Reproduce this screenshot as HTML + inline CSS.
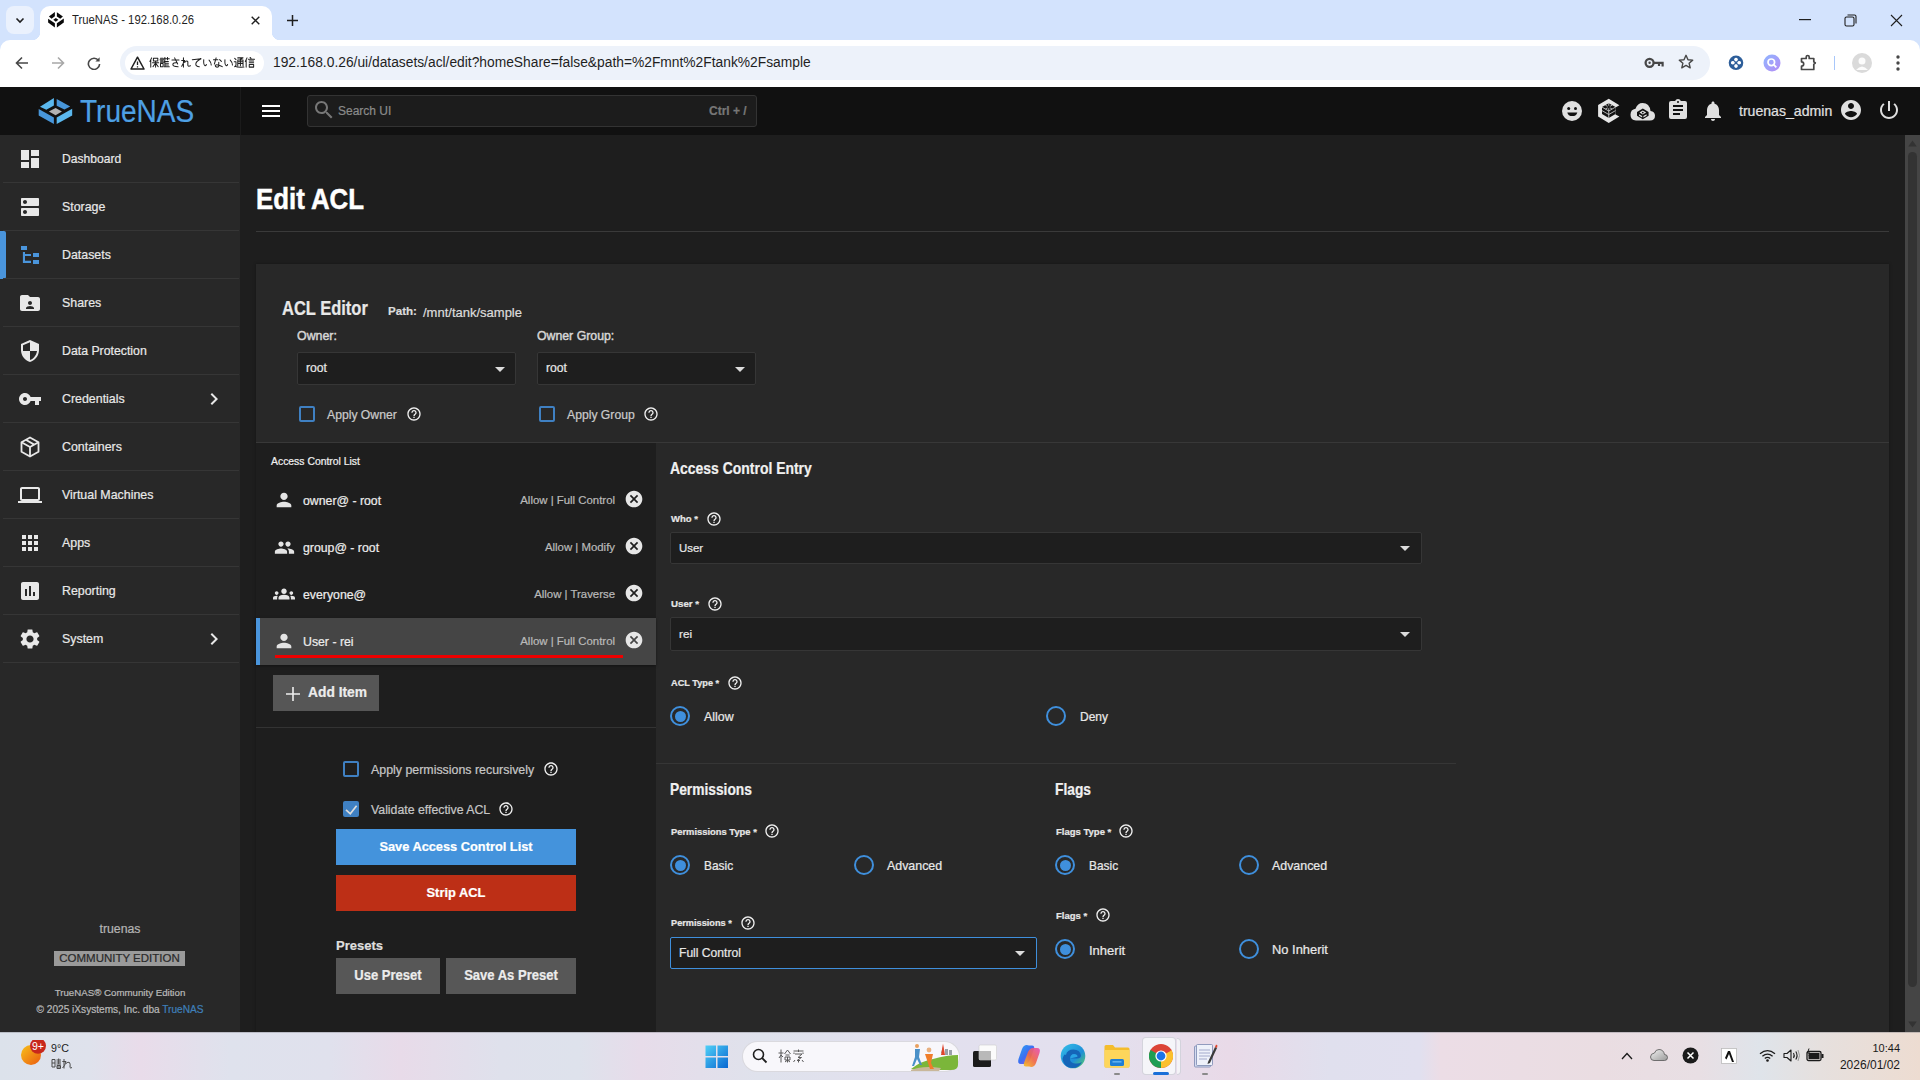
<!DOCTYPE html>
<html><head><meta charset="utf-8">
<style>
*{box-sizing:border-box;margin:0;padding:0}
html,body{width:1920px;height:1080px;overflow:hidden;background:#1e1e1e;font-family:"Liberation Sans",sans-serif}
.a{position:absolute}
.t{position:absolute;white-space:nowrap;line-height:1}
.w{-webkit-text-stroke:0.22px currentColor}
#chrome{position:absolute;left:0;top:0;width:1920px;height:87px;background:#d3e3fd}
#toolbar{position:absolute;left:0;top:40px;width:1920px;height:47px;background:#fff;border-radius:10px 10px 0 0}
#topbar{position:absolute;left:0;top:87px;width:1920px;height:48px;background:#111}
#sidebar{position:absolute;left:0;top:135px;width:240px;height:897px;background:#282828}
#main{position:absolute;left:240px;top:135px;width:1665px;height:897px;background:#1e1e1e}
#sb{position:absolute;left:1905px;top:135px;width:15px;height:897px;background:#454545}
#taskbar{position:absolute;left:0;top:1032px;width:1920px;height:48px;background:linear-gradient(90deg,#dce2eb 0px,#dfe2ec 90px,#e9dcea 140px,#dfe2ed 230px,#e0e1ed 330px,#e8dbe9 400px,#dfe1ec 500px,#dee2ec 580px,#e7dcea 640px,#dfe2ec 760px,#e2e0ee 900px,#e3e0ee 1100px,#e9dae8 1230px,#e0e0ee 1330px,#e1e0ef 1420px,#ecdde6 1440px,#eadde2 1600px,#e8dfe4 1700px,#dfe4ea 1760px,#e6e0de 1820px,#eddcd1 1920px)}
.nav{position:absolute;left:0;width:240px;height:48px}
.nav .lbl{-webkit-text-stroke:0.2px currentColor;position:absolute;left:62px;top:18px;font-size:13px;color:#e8e8e8;line-height:1;white-space:nowrap}
.nav .dv{position:absolute;left:3px;right:1px;bottom:0;height:1px;background:#363636}
.nav svg{position:absolute;left:20px;top:14px}
</style></head><body>
<div id="chrome">
  <div class="a" style="left:6px;top:6px;width:28px;height:28px;border-radius:8px;background:#eaf1fd"></div>
  <svg class="a" style="left:14px;top:14px" width="12" height="12" viewBox="0 0 12 12"><path d="M2.5 4.5L6 8l3.5-3.5" fill="none" stroke="#1f1f1f" stroke-width="1.6"/></svg>
  <div class="a" style="left:40px;top:6px;width:232px;height:34px;background:#fff;border-radius:10px 10px 0 0"></div>
  <div class="a" style="left:32px;top:32px;width:8px;height:8px;background:radial-gradient(circle at 0 0,#d3e3fd 8px,#fff 8.5px)"></div>
  <div class="a" style="left:272px;top:32px;width:8px;height:8px;background:radial-gradient(circle at 100% 0,#d3e3fd 8px,#fff 8.5px)"></div>
  <svg class="a" style="left:44px;top:8px" width="24" height="24" viewBox="44 8 24 24"><g fill="#0a0a0a"><path d="M48.9 16.4L54.9 12.1V16.2L51.6 18.7Z"/><path d="M56.9 12.2L62.9 16.4L60.2 18.7L56.9 16.4Z"/><path d="M48.1 18.7L54.9 23.3V27.6L48.1 22.4Z"/><path d="M56.9 23.3L63.8 18.4V22.4L56.9 27.6Z"/><path d="M53.3 19.8L55.8 18L58.4 19.8L55.8 21.8Z"/></g></svg>
  <div class="t" style="left:72px;top:14px;font-size:12.5px;color:#1f1f1f;transform:scaleX(0.904);transform-origin:0 0">TrueNAS - 192.168.0.26</div>
  <svg class="a" style="left:251px;top:16px" width="9" height="9" viewBox="0 0 9 9"><path d="M0.7 0.7L8.3 8.3M8.3 0.7L0.7 8.3" stroke="#1f1f1f" stroke-width="1.4"/></svg>
  <svg class="a" style="left:287px;top:15px" width="11" height="11" viewBox="0 0 11 11"><path d="M5.5 0V11M0 5.5H11" stroke="#1f1f1f" stroke-width="1.5"/></svg>
  <svg class="a" style="left:1799px;top:19px" width="12" height="2"><rect width="12" height="1.2" fill="#1f1f1f"/></svg>
  <svg class="a" style="left:1844px;top:14px" width="13" height="13" viewBox="0 0 13 13"><rect x="1" y="3" width="9" height="9" rx="1.5" fill="none" stroke="#1f1f1f" stroke-width="1.1"/><path d="M3.5 1H10.5Q12 1 12 2.5V9.5" fill="none" stroke="#1f1f1f" stroke-width="1.1"/></svg>
  <svg class="a" style="left:1890px;top:14px" width="13" height="13" viewBox="0 0 13 13"><path d="M1 1L12 12M12 1L1 12" stroke="#1f1f1f" stroke-width="1.1"/></svg>
  <div id="toolbar">
    <svg class="a" style="left:15px;top:16px" width="14" height="14" viewBox="0 0 14 14"><path d="M13 7H2M7 1.5L1.5 7L7 12.5" fill="none" stroke="#474747" stroke-width="1.6"/></svg>
    <svg class="a" style="left:51px;top:16px" width="14" height="14" viewBox="0 0 14 14"><path d="M1 7H12M7 1.5L12.5 7L7 12.5" fill="none" stroke="#a8a8a8" stroke-width="1.6"/></svg>
    <svg class="a" style="left:87px;top:16px" width="14" height="14" viewBox="0 0 14 14"><path d="M11.6 4.6A5.6 5.6 0 1 0 12.6 8" fill="none" stroke="#474747" stroke-width="1.6"/><path d="M12.6 1.2V5.4H8.4Z" fill="#474747"/></svg>
    <div class="a" style="left:120px;top:6px;width:1590px;height:34px;border-radius:17px;background:#edf2fa"></div>
    <div class="a" style="left:125px;top:11px;width:139px;height:24px;border-radius:12px;background:#fff"></div>
    <svg class="a" style="left:130px;top:16px" width="15" height="14" viewBox="0 0 15 14"><path d="M7.5 1.2L14 13H1Z" fill="none" stroke="#1f1f1f" stroke-width="1.5" stroke-linejoin="round"/><path d="M7.5 5.5V9M7.5 10.3V11.5" stroke="#1f1f1f" stroke-width="1.3"/></svg>
    <svg class="a" style="left:149px;top:17px" width="108" height="12" viewBox="0 0 108 12"><g fill="none" stroke="#1f1f1f" stroke-width="1.15" stroke-linecap="round" stroke-linejoin="round"><path transform="translate(0.0,0) scale(0.88)" d="M3 1L1 5M2 3.5V11.5M5 1.5H10V4.5H5Z M4 6.5H11M7.5 4.5V11.5M7.5 7L4.5 11M7.5 7L10.5 11"/><path transform="translate(10.6,0) scale(0.88)" d="M1 1.5H4M0.5 3H4.5M1 4.5H4M1 6H4M1 7.5H4V11H1Z M6 0.5V3M9 0.5V3M5 2H11M6 3.5L5 6M6 4.5V11M6 5H10M6 7H10M6 9H10M5.5 11H11"/><path transform="translate(21.2,0) scale(0.88)" d="M2 3.5H10M5 1L8.5 8M8 6.5Q3 6 3 8.5Q3 11 9 11"/><path transform="translate(31.8,0) scale(0.88)" d="M3 1V11.5M1 4H4.5Q2 9 1 10.5M4.5 6Q7 3.5 8 5.5V9.5Q8.5 11 11 10"/><path transform="translate(42.4,0) scale(0.88)" d="M1 3Q6 2.5 11 2Q5 5 5 8Q5 11 9 11"/><path transform="translate(53.0,0) scale(0.88)" d="M2 3Q1.5 9 3.5 10Q4.5 10 5 8.5M8 3.5Q10.5 6 10.5 9"/><path transform="translate(63.6,0) scale(0.88)" d="M1 3H6M4 1L2 8M8 3L10 5M7 6V10.5Q7 11.5 5 11.5Q3 11.5 3 10Q3 8.5 6 9Q9 9.5 11 11"/><path transform="translate(74.2,0) scale(0.88)" d="M2 3Q1.5 9 3.5 10Q4.5 10 5 8.5M8 3.5Q10.5 6 10.5 9"/><path transform="translate(84.8,0) scale(0.88)" d="M1 1.5L2.5 3M0.5 5.5H2.5V9.5L1 11M1.5 10.5Q4 12 11.5 11.5M4.5 1H10.5L7.5 2.5M4.5 3.5H10.5V10M4.5 3.5V10M4.5 5.5H10.5M4.5 7.5H10.5M7.5 3.5V10"/><path transform="translate(95.4,0) scale(0.88)" d="M3 1L1 5M2 3.5V11.5M6.5 0.5L7.5 1.5M4.5 2.5H11.5M5.5 4.5H10.5M5.5 6.5H10.5M5.5 8.5H10.5V11.5H5.5Z"/></g></svg>
    <div class="t" style="left:273px;top:16px;font-size:13.8px;color:#1f1f1f">192.168.0.26/ui/datasets/acl/edit?homeShare=false&amp;path=%2Fmnt%2Ftank%2Fsample</div>
    <svg class="a" style="left:1644px;top:16px" width="20" height="14" viewBox="0 0 20 14"><circle cx="5.6" cy="6.8" r="4" fill="none" stroke="#474747" stroke-width="2.3"/><circle cx="5.6" cy="6.8" r="1.2" fill="#474747"/><path d="M9.4 6.8H18.6V10.5M15 6.8V10" fill="none" stroke="#474747" stroke-width="2.2"/></svg>
    <svg class="a" style="left:1678px;top:14px" width="16" height="16" viewBox="0 0 16 16"><path d="M8 1.3L10 5.7L14.7 6.1L11.1 9.2L12.2 13.8L8 11.4L3.8 13.8L4.9 9.2L1.3 6.1L6 5.7Z" fill="none" stroke="#474747" stroke-width="1.4" stroke-linejoin="round"/></svg>
    <svg class="a" style="left:1728px;top:15px" width="16" height="16" viewBox="0 0 16 16"><circle cx="8" cy="7.8" r="7.3" fill="#2d5e9a"/><path d="M8 2.8A1.9 1.9 0 0 1 8 6.4V9.2A1.9 1.9 0 0 1 8 12.8A1.9 1.9 0 0 1 8 9.2V6.4A1.9 1.9 0 0 1 8 2.8Z M3 7.8A1.9 1.9 0 0 1 6.6 7.8H9.4A1.9 1.9 0 0 1 13 7.8A1.9 1.9 0 0 1 9.4 7.8H6.6A1.9 1.9 0 0 1 3 7.8Z" fill="#fff"/><circle cx="4.8" cy="7.8" r="1.8" fill="#fff"/><circle cx="11.2" cy="7.8" r="1.8" fill="#fff"/><circle cx="8" cy="4.6" r="1.8" fill="#fff"/><circle cx="8" cy="11" r="1.8" fill="#fff"/><circle cx="8" cy="7.8" r="1.1" fill="#2d5e9a"/></svg>
    <svg class="a" style="left:1763px;top:14px" width="18" height="18" viewBox="0 0 18 18"><defs><linearGradient id="pg" x1="0" y1="0" x2="1" y2="1"><stop offset="0" stop-color="#8fb6ff"/><stop offset="1" stop-color="#b58cf5"/></linearGradient></defs><circle cx="9" cy="9" r="8.5" fill="url(#pg)"/><circle cx="8.3" cy="8.3" r="3.3" fill="none" stroke="#fff" stroke-width="1.7"/><path d="M10.7 10.7L13.3 13.3" stroke="#fff" stroke-width="1.8"/></svg>
    <svg class="a" style="left:1800px;top:14px" width="18" height="18" viewBox="0 0 18 18"><path d="M1.5 4.5H6.2V3A1.5 1.5 0 0 1 9.2 3V4.5H13.8V7.8L15.3 9L13.8 10.2V15.5H1.5V12.2A1.6 1.6 0 0 0 1.5 7.8Z" fill="none" stroke="#474747" stroke-width="1.7" stroke-linejoin="round"/></svg>
    <div class="a" style="left:1834px;top:16px;width:1px;height:14px;background:#a8c7fa"></div>
    <svg class="a" style="left:1852px;top:13px" width="20" height="20" viewBox="0 0 20 20"><circle cx="10" cy="10" r="10" fill="#dadada"/><circle cx="10" cy="8" r="3.5" fill="#fff" opacity=".9"/><path d="M4 17Q10 10 16 17" fill="#fff" opacity=".9"/></svg>
    <svg class="a" style="left:1895px;top:14px" width="6" height="18" viewBox="0 0 6 18"><circle cx="3" cy="3" r="1.7" fill="#474747"/><circle cx="3" cy="9" r="1.7" fill="#474747"/><circle cx="3" cy="15" r="1.7" fill="#474747"/></svg>
  </div>
</div>
<div id="topbar">
  <svg class="a" style="left:0;top:0" width="240" height="48" viewBox="0 87 240 48">
    <path d="M40 106.7L53.9 98V105.6L46.3 109.8Z" fill="#5bb8ee"/>
    <path d="M56.7 98.9L70.2 106.5L64.4 109.6L56.7 105.7Z" fill="#4896da"/>
    <path d="M38.7 108.9L53.9 117.4V124L38.7 115.6Z" fill="#4896da"/>
    <path d="M56.7 117.4L72.2 108.7V115.6L56.7 124Z" fill="#5bb8ee"/>
    <path d="M48.9 111.5L55.6 108L61.9 111.5L55.6 115.2Z" fill="#b3b3b3"/>
  </svg>
  <div class="t w" style="left:80px;top:9px;font-size:31px;color:#4ea0e4;transform:scaleX(0.903);transform-origin:0 0">TrueNAS</div>
  <div class="a" style="left:240px;top:0;width:1px;height:48px;background:#1b1b1b"></div>
  <svg class="a" style="left:259px;top:12px" width="24" height="24" viewBox="0 0 24 24"><path d="M3 18h18v-2H3v2zm0-5h18v-2H3v2zm0-7v2h18V6H3z" fill="#fff"/></svg>
  <div class="a" style="left:307px;top:8px;width:450px;height:32px;background:#1c1c1c;border:1px solid #333;border-radius:3px"></div>
  <svg class="a" style="left:312px;top:11px" width="24" height="24" viewBox="0 0 24 24"><path d="M15.5 14h-.79l-.28-.27C15.41 12.59 16 11.11 16 9.5 16 5.91 13.09 3 9.5 3S3 5.91 3 9.5 5.91 16 9.5 16c1.61 0 3.09-.59 4.23-1.57l.27.28v.79l5 4.99L20.49 19l-4.99-5zm-6 0C7.01 14 5 11.99 5 9.5S7.01 5 9.5 5 14 7.01 14 9.5 11.99 14 9.5 14z" fill="#777"/></svg>
  <div class="t w" style="left:338px;top:18px;font-size:12px;color:#8a8a8a">Search UI</div>
  <div class="t w" style="left:709px;top:18px;font-size:12px;color:#777;font-weight:bold">Ctrl + /</div>
  <svg class="a" style="left:1560px;top:12px" width="24" height="24" viewBox="0 0 24 24"><circle cx="12" cy="12" r="10" fill="#e0e0e0"/><circle cx="8.7" cy="9.4" r="1.5" fill="#111"/><circle cx="15.5" cy="9.4" r="1.5" fill="#111"/><path d="M7.3 13.4H17.3Q16.6 17 12.3 17Q8 17 7.3 13.4Z" fill="#111"/></svg>
  <svg class="a" style="left:1596px;top:11px" width="26" height="26" viewBox="1596 98 26 26"><path d="M1608.75 98.8L1619.4 105.3L1615.5 107.6V114.4L1619.4 116.5L1608.75 123L1598.1 116.5V105Z" fill="#e6e6e6"/><path d="M1608.75 103.2L1615.5 107.1V113.9L1608.75 118L1602 113.9V107.1Z" fill="#111"/><g stroke="#e6e6e6" stroke-width=".75" fill="none"><path d="M1602 107.1L1608.75 111L1615.5 107.1M1608.75 103.2V118M1602 110.6L1608.75 114.5L1615.5 110.6M1605.4 105.15L1612.1 109.05M1612.1 105.15L1605.4 109.05"/></g><path d="M1608.75 105.6L1610.6 107.1L1608.75 108.6L1606.9 107.1Z" fill="#111"/></svg>
  <svg class="a" style="left:1630px;top:15px" width="26" height="19" viewBox="0 0 26 19"><path d="M6 18.5H20Q25 18.5 25 13.8Q25 9.5 20.5 9Q19.5 1 12.6 1Q7.5 1 5.5 6.8Q0.5 7.5 0.5 12.8Q0.5 18.5 6 18.5Z" fill="#e0e0e0"/><path d="M12.8 6.5L18.6 9.9V13.8L12.8 17.2L7 13.8V9.9Z" fill="#111"/><path d="M12.8 8.6L16.2 10.6L12.8 12.6L9.4 10.6Z M9 12.2L12.2 14V15.6L9 13.8Z M16.6 12.2L13.4 14V15.6L16.6 13.8Z" fill="#e0e0e0"/><circle cx="12.8" cy="10.6" r="0.9" fill="#111"/></svg>
  <svg class="a" style="left:1666px;top:11px" width="24" height="24" viewBox="0 0 24 24"><path d="M17,9H7V7H17M17,13H7V11H17M14,17H7V15H14M12,3A1,1 0 0,1 13,4A1,1 0 0,1 12,5A1,1 0 0,1 11,4A1,1 0 0,1 12,3M19,3H14.82C14.4,1.84 13.3,1 12,1C10.7,1 9.6,1.84 9.18,3H5A2,2 0 0,0 3,5V19A2,2 0 0,0 5,21H19A2,2 0 0,0 21,19V5A2,2 0 0,0 19,3Z" fill="#e0e0e0"/></svg>
  <svg class="a" style="left:1701px;top:12px" width="24" height="24" viewBox="0 0 24 24"><path d="M12 22c1.1 0 2-.9 2-2h-4c0 1.1.89 2 2 2zm6-6v-5c0-3.07-1.64-5.64-4.5-6.32V4c0-.83-.67-1.5-1.5-1.5s-1.5.67-1.5 1.5v.68C7.63 5.36 6 7.92 6 11v5l-2 2v1h16v-1l-2-2z" fill="#e0e0e0"/></svg>
  <div class="t w" style="left:1739px;top:17px;font-size:14.1px;color:#e0e0e0">truenas_admin</div>
  <svg class="a" style="left:1839px;top:11px" width="24" height="24" viewBox="0 0 24 24"><path d="M12 2C6.48 2 2 6.48 2 12s4.48 10 10 10 10-4.48 10-10S17.52 2 12 2zm0 3c1.66 0 3 1.34 3 3s-1.34 3-3 3-3-1.34-3-3 1.34-3 3-3zm0 14.2c-2.5 0-4.71-1.28-6-3.22.03-1.99 4-3.08 6-3.08 1.99 0 5.97 1.09 6 3.08-1.29 1.94-3.5 3.22-6 3.22z" fill="#e0e0e0"/></svg>
  <svg class="a" style="left:1877px;top:11px" width="24" height="24" viewBox="0 0 24 24"><path d="M13 3h-2v10h2V3zm4.83 2.17l-1.42 1.42C17.99 7.86 19 9.81 19 12c0 3.870-3.13 7-7 7s-7-3.13-7-7c0-2.19 1.010-4.14 2.58-5.42L6.17 5.17C4.23 6.82 3 9.26 3 12c0 4.97 4.03 9 9 9s9-4.03 9-9c0-2.74-1.23-5.18-3.17-6.83z" fill="#e0e0e0"/></svg>
</div>
<div id="sidebar">
<div class="nav" style="top:0px">
<svg width="24" height="24" viewBox="0 0 24 24" style="left:18px;top:12px" fill="#e8e8e8"><path d="M3 13h8V3H3v10zm0 8h8v-6H3v6zm10 0h8V11h-8v10zm0-18v6h8V3h-8z"/></svg>
<div class="lbl" style="font-size:12.1px">Dashboard</div>
<div class="dv"></div></div>
<div class="nav" style="top:48px">
<svg width="24" height="24" viewBox="0 0 24 24" style="left:18px;top:12px" fill="#e8e8e8"><path d="M20 13H4c-.55 0-1 .45-1 1v6c0 .55.45 1 1 1h16c.55 0 1-.45 1-1v-6c0-.55-.45-1-1-1zM7 19c-1.1 0-2-.9-2-2s.9-2 2-2 2 .9 2 2-.9 2-2 2zM20 3H4c-.55 0-1 .45-1 1v6c0 .55.45 1 1 1h16c.55 0 1-.45 1-1V4c0-.55-.45-1-1-1zM7 9c-1.1 0-2-.9-2-2s.9-2 2-2 2 .9 2 2-.9 2-2 2z"/></svg>
<div class="lbl" style="font-size:12.4px">Storage</div>
<div class="dv"></div></div>
<div class="nav" style="top:96px">
<div class="a" style="left:0;top:0;width:6px;height:48px;background:#4a95dc;border-radius:0 2px 2px 0"></div>
<svg width="24" height="24" viewBox="0 0 24 24" style="left:18px;top:12px" fill="#4a95dc"><path d="M3 3H9V7H3Z M4.9 9H7V20H4.9Z M7 10.9H13V13.1H7Z M7 17.8H13V20H7Z M15 10H21V14H15Z M15 16.9H21V21H15Z"/></svg>
<div class="lbl" style="font-size:12.4px">Datasets</div>
<div class="dv"></div></div>
<div class="nav" style="top:144px">
<svg width="24" height="24" viewBox="0 0 24 24" style="left:18px;top:12px" fill="#e8e8e8"><path d="M20 6h-8l-2-2H4c-1.1 0-1.99.9-1.99 2L2 18c0 1.1.9 2 2 2h16c1.1 0 2-.9 2-2V8c0-1.1-.9-2-2-2zm-8 4c1.1 0 2 .9 2 2s-.9 2-2 2-2-.9-2-2 .9-2 2-2zm4 8H8v-1c0-1.33 2.67-2 4-2s4 .67 4 2v1z"/></svg>
<div class="lbl" style="font-size:12.4px">Shares</div>
<div class="dv"></div></div>
<div class="nav" style="top:192px">
<svg width="24" height="24" viewBox="0 0 24 24" style="left:18px;top:12px" fill="#e8e8e8"><path d="M12 1L3 5v6c0 5.55 3.84 10.74 9 12 5.16-1.26 9-6.45 9-12V5l-9-4zm0 10.99h7c-.53 4.12-3.28 7.79-7 8.94V12H5V6.3l7-3.11v8.8z"/></svg>
<div class="lbl" style="font-size:12.3px">Data Protection</div>
<div class="dv"></div></div>
<div class="nav" style="top:240px">
<svg width="24" height="24" viewBox="0 0 24 24" style="left:18px;top:12px" fill="#e8e8e8"><path d="M12.65 10C11.83 7.67 9.61 6 7 6c-3.31 0-6 2.69-6 6s2.69 6 6 6c2.61 0 4.83-1.67 5.65-4H17v4h4v-4h2v-4H12.65zM7 14c-1.1 0-2-.9-2-2s.9-2 2-2 2 .9 2 2-.9 2-2 2z"/></svg>
<div class="lbl" style="font-size:12.4px">Credentials</div>
<svg width="24" height="24" viewBox="0 0 24 24" style="left:202px;top:12px" fill="#e8e8e8"><path d="M10 6L8.59 7.41 13.17 12l-4.58 4.59L10 18l6-6z"/></svg>
<div class="dv"></div></div>
<div class="nav" style="top:288px">
<svg width="24" height="24" viewBox="0 0 24 24" style="left:18px;top:12px" fill="#e8e8e8"><g fill="none" stroke="#e8e8e8" stroke-width="1.8" stroke-linejoin="round"><path d="M12 2.5L20.5 7.2V16.8L12 21.5L3.5 16.8V7.2Z"/><path d="M3.5 7.2L12 12L20.5 7.2M12 12V21.5M7.8 4.8L16.2 9.6"/></g></svg>
<div class="lbl" style="font-size:12.4px">Containers</div>
<div class="dv"></div></div>
<div class="nav" style="top:336px">
<svg width="24" height="24" viewBox="0 0 24 24" style="left:18px;top:12px" fill="#e8e8e8"><path d="M20 18c1.1 0 1.99-.9 1.99-2L22 6c0-1.1-.9-2-2-2H4c-1.1 0-2 .9-2 2v10c0 1.1.9 2 2 2H0v2h24v-2h-4zM4 6h16v10H4V6z"/></svg>
<div class="lbl" style="font-size:12.4px">Virtual Machines</div>
<div class="dv"></div></div>
<div class="nav" style="top:384px">
<svg width="24" height="24" viewBox="0 0 24 24" style="left:18px;top:12px" fill="#e8e8e8"><path d="M4 8h4V4H4v4zm6 12h4v-4h-4v4zm-6 0h4v-4H4v4zm0-6h4v-4H4v4zm6 0h4v-4h-4v4zm6-10v4h4V4h-4zm-6 4h4V4h-4v4zm6 6h4v-4h-4v4zm0 6h4v-4h-4v4z"/></svg>
<div class="lbl" style="font-size:12.4px">Apps</div>
<div class="dv"></div></div>
<div class="nav" style="top:432px">
<svg width="24" height="24" viewBox="0 0 24 24" style="left:18px;top:12px" fill="#e8e8e8"><path d="M19 3H5c-1.1 0-2 .9-2 2v14c0 1.1.9 2 2 2h14c1.1 0 2-.9 2-2V5c0-1.1-.9-2-2-2zM9 17H7v-7h2v7zm4 0h-2V7h2v10zm4 0h-2v-4h2v4z"/></svg>
<div class="lbl" style="font-size:12.4px">Reporting</div>
<div class="dv"></div></div>
<div class="nav" style="top:480px">
<svg width="24" height="24" viewBox="0 0 24 24" style="left:18px;top:12px" fill="#e8e8e8"><path d="M19.14 12.94c.04-.3.06-.61.06-.94 0-.32-.02-.64-.07-.94l2.030-1.58c.18-.14.23-.41.12-.61l-1.920-3.32c-.12-.22-.37-.29-.59-.22l-2.390.96c-.5-.38-1.030-.7-1.620-.94l-.36-2.540c-.04-.24-.24-.41-.48-.41h-3.840c-.24 0-.43.17-.47.41l-.36 2.540c-.59.24-1.130.57-1.620.94l-2.390-.96c-.22-.08-.47 0-.59.22L2.74 8.87c-.12.21-.08.47.12.61l2.030 1.580c-.05.3-.09.63-.09.94s.02.64.07.94l-2.030 1.580c-.18.14-.23.41-.12.61l1.920 3.320c.12.22.37.29.59.22l2.390-.96c.5.38 1.030.7 1.620.94l.36 2.540c.05.24.24.41.48.41h3.840c.24 0 .44-.17.47-.41l.36-2.540c.59-.24 1.130-.56 1.620-.94l2.390.96c.22.08.47 0 .59-.22l1.920-3.320c.12-.22.07-.47-.12-.61l-2.010-1.580zM12 15.6c-1.98 0-3.600-1.620-3.600-3.600s1.620-3.600 3.600-3.600 3.600 1.620 3.600 3.600-1.620 3.600-3.600 3.600z"/></svg>
<div class="lbl" style="font-size:12.4px">System</div>
<svg width="24" height="24" viewBox="0 0 24 24" style="left:202px;top:12px" fill="#e8e8e8"><path d="M10 6L8.59 7.41 13.17 12l-4.58 4.59L10 18l6-6z"/></svg>
<div class="dv"></div></div>
<div class="t w" style="left:0;width:240px;text-align:center;top:788px;font-size:12.3px;color:#b4b4b4">truenas</div>
<div class="a" style="left:54px;top:816px;width:131px;height:15px;background:#9a9a9a"></div>
<div class="t w" style="left:54px;width:131px;text-align:center;top:818px;font-size:11.5px;color:#2a2a2a">COMMUNITY EDITION</div>
<div class="t w" style="left:0;width:240px;text-align:center;top:853px;font-size:9.7px;color:#b8b8b8">TrueNAS® Community Edition</div>
<div class="t w" style="left:0;width:240px;text-align:center;top:870px;font-size:10.1px;color:#b8b8b8">© 2025 iXsystems, Inc. dba <span style="color:#3f7fb8">TrueNAS</span></div>
</div>
<div id="main"></div>
<div class="t w" style="left:256px;top:183.7px;font-size:29.5px;font-weight:bold;color:#fff;transform:scaleX(0.875);transform-origin:0 0;-webkit-text-stroke:0.5px #fff">Edit ACL</div>
<div class="a" style="left:256px;top:231px;width:1633px;height:1px;background:#3a3a3a"></div>
<div class="a" style="left:256px;top:264px;width:1633px;height:768px;background:#282828;box-shadow:0 0 3px rgba(0,0,0,.35)"></div>
<div class="t w" style="left:282px;top:299px;font-size:19.5px;font-weight:bold;color:#e8e8e8;transform:scaleX(0.846);transform-origin:0 0">ACL Editor</div>
<div class="t w" style="left:388px;top:306px;font-size:11.8px;font-weight:bold;transform:scaleX(0.98);transform-origin:0 0;color:#dcdcdc">Path:</div>
<div class="t w" style="left:423px;top:306px;font-size:13px;color:#dcdcdc">/mnt/tank/sample</div>
<div class="t w" style="left:297px;top:329.5px;font-size:12.4px;-webkit-text-stroke:0.45px #d6d6d6;color:#d6d6d6">Owner:</div>
<div class="t w" style="left:537px;top:329.5px;font-size:12.3px;-webkit-text-stroke:0.45px #d6d6d6;color:#d6d6d6">Owner Group:</div>
<div class="a" style="left:297px;top:352px;width:219px;height:33px;background:#1e1e1e;border:1px solid #363636;border-radius:2px"></div>
<div class="t w" style="left:306px;top:362px;font-size:12.2px;color:#e6e6e6">root</div>
<svg class="a" style="left:495px;top:367px" width="10" height="5" viewBox="0 0 10 5"><path d="M0 0H10L5 5Z" fill="#dcdcdc"/></svg>
<div class="a" style="left:537px;top:352px;width:219px;height:33px;background:#1e1e1e;border:1px solid #363636;border-radius:2px"></div>
<div class="t w" style="left:546px;top:362px;font-size:12.2px;color:#e6e6e6">root</div>
<svg class="a" style="left:735px;top:367px" width="10" height="5" viewBox="0 0 10 5"><path d="M0 0H10L5 5Z" fill="#dcdcdc"/></svg>
<div class="a" style="left:299px;top:406px;width:16px;height:16px;border:2px solid #3f80c2;border-radius:2px"></div>
<div class="t w" style="left:327px;top:409px;font-size:12.2px;color:#cacaca">Apply Owner</div>
<svg class="a" style="left:406px;top:406px" width="16" height="16" viewBox="0 0 24 24"><path d="M11 18h2v-2h-2v2zm1-16C6.48 2 2 6.48 2 12s4.48 10 10 10 10-4.48 10-10S17.52 2 12 2zm0 18c-4.41 0-8-3.59-8-8s3.59-8 8-8 8 3.59 8 8-3.59 8-8 8zm0-14c-2.21 0-4 1.79-4 4h2c0-1.1.9-2 2-2s2 .9 2 2c0 2-3 1.75-3 5h2c0-2.25 3-2.5 3-5 0-2.21-1.79-4-4-4z" fill="#f0f0f0"/></svg>
<div class="a" style="left:539px;top:406px;width:16px;height:16px;border:2px solid #3f80c2;border-radius:2px"></div>
<div class="t w" style="left:567px;top:409px;font-size:12.2px;color:#cacaca">Apply Group</div>
<svg class="a" style="left:643px;top:406px" width="16" height="16" viewBox="0 0 24 24"><path d="M11 18h2v-2h-2v2zm1-16C6.48 2 2 6.48 2 12s4.48 10 10 10 10-4.48 10-10S17.52 2 12 2zm0 18c-4.41 0-8-3.59-8-8s3.59-8 8-8 8 3.59 8 8-3.59 8-8 8zm0-14c-2.21 0-4 1.79-4 4h2c0-1.1.9-2 2-2s2 .9 2 2c0 2-3 1.75-3 5h2c0-2.25 3-2.5 3-5 0-2.21-1.79-4-4-4z" fill="#f0f0f0"/></svg>
<div class="a" style="left:256px;top:442px;width:1633px;height:1px;background:#383838"></div>
<div class="a" style="left:256px;top:443px;width:400px;height:589px;background:#1e1e1e"></div>
<div class="t w" style="left:271px;top:457px;font-size:10.4px;color:#f0f0f0">Access Control List</div>
<div class="a" style="left:256px;top:618px;width:400px;height:47px;background:#454545;box-shadow:0 1px 3px rgba(0,0,0,.4)"></div>
<div class="a" style="left:256px;top:618px;width:4px;height:47px;background:#4a95dc"></div>
<svg class="a" style="left:273px;top:489px" width="22" height="22" viewBox="0 0 24 24"><path d="M12 12c2.21 0 4-1.79 4-4s-1.79-4-4-4-4 1.79-4 4 1.79 4 4 4zm0 2c-2.67 0-8 1.34-8 4v2h16v-2c0-2.66-5.33-4-8-4z" fill="#e4e4e4"/></svg>
<div class="t w" style="left:303px;top:495px;font-size:12.3px;color:#ececec">owner@ - root</div>
<div class="t w" style="right:1305px;top:495px;font-size:11.4px;color:#b9b9b9">Allow | Full Control</div>
<svg class="a" style="left:624px;top:489px" width="20" height="20" viewBox="0 0 24 24"><path d="M12 2C6.47 2 2 6.47 2 12s4.47 10 10 10 10-4.47 10-10S17.53 2 12 2zm5 13.59L15.59 17 12 13.41 8.41 17 7 15.59 10.59 12 7 8.41 8.41 7 12 10.59 15.590 7 17 8.41 13.41 12 17 15.59z" fill="#e6e6e6"/></svg>
<svg class="a" style="left:274px;top:537px" width="21" height="21" viewBox="0 0 24 24"><path d="M16 11c1.66 0 2.99-1.34 2.99-3S17.66 5 16 5c-1.66 0-3 1.34-3 3s1.34 3 3 3zm-8 0c1.66 0 2.99-1.34 2.99-3S9.66 5 8 5C6.34 5 5 6.34 5 8s1.34 3 3 3zm0 2c-2.33 0-7 1.17-7 3.5V19h14v-2.5c0-2.33-4.67-3.5-7-3.5zm8 0c-.29 0-.62.02-.97.05 1.16.84 1.970 1.970 1.970 3.450V19h6v-2.5c0-2.33-4.67-3.5-7-3.5z" fill="#e4e4e4"/></svg>
<div class="t w" style="left:303px;top:542px;font-size:12.3px;color:#ececec">group@ - root</div>
<div class="t w" style="right:1305px;top:542px;font-size:11.4px;color:#b9b9b9">Allow | Modify</div>
<svg class="a" style="left:624px;top:536px" width="20" height="20" viewBox="0 0 24 24"><path d="M12 2C6.47 2 2 6.47 2 12s4.47 10 10 10 10-4.47 10-10S17.53 2 12 2zm5 13.59L15.59 17 12 13.41 8.41 17 7 15.59 10.59 12 7 8.41 8.41 7 12 10.59 15.590 7 17 8.41 13.41 12 17 15.59z" fill="#e6e6e6"/></svg>
<svg class="a" style="left:273px;top:583px" width="22" height="22" viewBox="0 0 24 24"><path d="M12 12.75c1.63 0 3.07.39 4.24.9 1.08.48 1.76 1.56 1.76 2.73V18H6v-1.61c0-1.18.68-2.26 1.76-2.73 1.17-.52 2.61-.91 4.24-.91zM4 13c1.1 0 2-.9 2-2s-.9-2-2-2-2 .9-2 2 .9 2 2 2zm1.13 1.1c-.37-.06-.74-.1-1.13-.1-.99 0-1.93.21-2.780.58C.48 14.9 0 15.62 0 16.43V18h4.5v-1.61c0-.83.23-1.61.63-2.29zM20 13c1.1 0 2-.9 2-2s-.9-2-2-2-2 .9-2 2 .9 2 2 2zm4 3.43c0-.81-.48-1.53-1.22-1.85-.85-.37-1.79-.58-2.78-.58-.39 0-.76.04-1.13.1.4.68.63 1.46.63 2.29V18H24v-1.57zM12 6c1.66 0 3 1.34 3 3s-1.34 3-3 3-3-1.34-3-3 1.34-3 3-3z" fill="#e4e4e4"/></svg>
<div class="t w" style="left:303px;top:589px;font-size:12.3px;color:#ececec">everyone@</div>
<div class="t w" style="right:1305px;top:589px;font-size:11.4px;color:#b9b9b9">Allow | Traverse</div>
<svg class="a" style="left:624px;top:583px" width="20" height="20" viewBox="0 0 24 24"><path d="M12 2C6.47 2 2 6.47 2 12s4.47 10 10 10 10-4.47 10-10S17.53 2 12 2zm5 13.59L15.59 17 12 13.41 8.41 17 7 15.59 10.59 12 7 8.41 8.41 7 12 10.59 15.590 7 17 8.41 13.41 12 17 15.59z" fill="#e6e6e6"/></svg>
<svg class="a" style="left:273px;top:630px" width="22" height="22" viewBox="0 0 24 24"><path d="M12 12c2.21 0 4-1.79 4-4s-1.79-4-4-4-4 1.79-4 4 1.79 4 4 4zm0 2c-2.67 0-8 1.34-8 4v2h16v-2c0-2.66-5.33-4-8-4z" fill="#e4e4e4"/></svg>
<div class="t w" style="left:303px;top:636px;font-size:12.3px;color:#ececec">User - rei</div>
<div class="t w" style="right:1305px;top:636px;font-size:11.4px;color:#b9b9b9">Allow | Full Control</div>
<svg class="a" style="left:624px;top:630px" width="20" height="20" viewBox="0 0 24 24"><path d="M12 2C6.47 2 2 6.47 2 12s4.47 10 10 10 10-4.47 10-10S17.53 2 12 2zm5 13.59L15.59 17 12 13.41 8.41 17 7 15.59 10.59 12 7 8.41 8.41 7 12 10.59 15.590 7 17 8.41 13.41 12 17 15.59z" fill="#e6e6e6"/></svg>
<div class="a" style="left:275px;top:655px;width:348px;height:3px;background:#ee0000"></div>
<div class="a" style="left:273px;top:675px;width:106px;height:36px;background:#565656"></div>
<svg class="a" style="left:286px;top:687px" width="14" height="14" viewBox="0 0 14 14"><path d="M7 0V14M0 7H14" stroke="#eee" stroke-width="1.6"/></svg>
<div class="t w" style="left:308px;top:686px;font-size:13.8px;font-weight:bold;color:#ececec">Add Item</div>
<div class="a" style="left:256px;top:727px;width:400px;height:1px;background:#333"></div>
<div class="a" style="left:343px;top:761px;width:16px;height:16px;border:2px solid #3f80c2;border-radius:2px"></div>
<div class="t w" style="left:371px;top:764px;font-size:12.4px;color:#c6c6c6">Apply permissions recursively</div>
<svg class="a" style="left:543.0px;top:761.0px" width="16" height="16" viewBox="0 0 24 24"><path d="M11 18h2v-2h-2v2zm1-16C6.48 2 2 6.48 2 12s4.48 10 10 10 10-4.48 10-10S17.52 2 12 2zm0 18c-4.41 0-8-3.59-8-8s3.59-8 8-8 8 3.59 8 8-3.59 8-8 8zm0-14c-2.21 0-4 1.79-4 4h2c0-1.1.9-2 2-2s2 .9 2 2c0 2-3 1.75-3 5h2c0-2.25 3-2.5 3-5 0-2.21-1.79-4-4-4z" fill="#f0f0f0"/></svg>
<div class="a" style="left:343px;top:801px;width:16px;height:16px;background:#3f80c2;border-radius:2px"></div>
<svg class="a" style="left:343px;top:801px" width="16" height="16" viewBox="343 801 16 16"><path d="M346 809.8L350.3 813.8L356.6 805.8" fill="none" stroke="#dcdcdc" stroke-width="1.7"/></svg>
<div class="t w" style="left:371px;top:804px;font-size:12.3px;color:#c6c6c6">Validate effective ACL</div>
<svg class="a" style="left:498.0px;top:801.0px" width="16" height="16" viewBox="0 0 24 24"><path d="M11 18h2v-2h-2v2zm1-16C6.48 2 2 6.48 2 12s4.48 10 10 10 10-4.48 10-10S17.52 2 12 2zm0 18c-4.41 0-8-3.59-8-8s3.59-8 8-8 8 3.59 8 8-3.59 8-8 8zm0-14c-2.21 0-4 1.79-4 4h2c0-1.1.9-2 2-2s2 .9 2 2c0 2-3 1.75-3 5h2c0-2.25 3-2.5 3-5 0-2.21-1.79-4-4-4z" fill="#f0f0f0"/></svg>
<div class="a" style="left:336px;top:829px;width:240px;height:36px;background:#4493dc"></div>
<div class="t w" style="left:336px;width:240px;text-align:center;top:841px;font-size:12.8px;font-weight:bold;color:#fff">Save Access Control List</div>
<div class="a" style="left:336px;top:875px;width:240px;height:36px;background:#bd2f16"></div>
<div class="t w" style="left:336px;width:240px;text-align:center;top:887px;font-size:12.9px;font-weight:bold;color:#fff">Strip ACL</div>
<div class="t w" style="left:336px;top:939px;font-size:13px;font-weight:bold;color:#dedede">Presets</div>
<div class="a" style="left:336px;top:958px;width:104px;height:36px;background:#575757"></div>
<div class="t w" style="left:336px;width:104px;text-align:center;top:968px;font-size:14px;font-weight:bold;color:#ececec;transform:scaleX(0.93)">Use Preset</div>
<div class="a" style="left:446px;top:958px;width:130px;height:36px;background:#575757"></div>
<div class="t w" style="left:446px;width:130px;text-align:center;top:968px;font-size:14px;font-weight:bold;color:#ececec;transform:scaleX(0.93)">Save As Preset</div>
<div class="t w" style="left:670px;top:459.5px;font-size:16.5px;font-weight:bold;color:#f0f0f0;transform:scaleX(0.845);transform-origin:0 0">Access Control Entry</div>
<div class="t w" style="left:671px;top:513.75px;font-size:9.5px;font-weight:bold;color:#e6e6e6">Who *</div>
<svg class="a" style="left:706.0px;top:511.0px" width="16" height="16" viewBox="0 0 24 24"><path d="M11 18h2v-2h-2v2zm1-16C6.48 2 2 6.48 2 12s4.48 10 10 10 10-4.48 10-10S17.52 2 12 2zm0 18c-4.41 0-8-3.59-8-8s3.59-8 8-8 8 3.59 8 8-3.59 8-8 8zm0-14c-2.21 0-4 1.79-4 4h2c0-1.1.9-2 2-2s2 .9 2 2c0 2-3 1.75-3 5h2c0-2.25 3-2.5 3-5 0-2.21-1.79-4-4-4z" fill="#f0f0f0"/></svg>
<div class="a" style="left:670px;top:532px;width:752px;height:32px;background:#1e1e1e;border:1px solid #363636;border-radius:2px"></div><div class="t w" style="left:679px;top:543px;font-size:11.4px;color:#e6e6e6">User</div><svg class="a" style="left:1400px;top:545.5px" width="10" height="5" viewBox="0 0 10 5"><path d="M0 0H10L5 5Z" fill="#dcdcdc"/></svg>
<div class="t w" style="left:671px;top:598.65px;font-size:9.7px;font-weight:bold;color:#e6e6e6">User *</div>
<svg class="a" style="left:707.0px;top:596.0px" width="16" height="16" viewBox="0 0 24 24"><path d="M11 18h2v-2h-2v2zm1-16C6.48 2 2 6.48 2 12s4.48 10 10 10 10-4.48 10-10S17.52 2 12 2zm0 18c-4.41 0-8-3.59-8-8s3.59-8 8-8 8 3.59 8 8-3.59 8-8 8zm0-14c-2.21 0-4 1.79-4 4h2c0-1.1.9-2 2-2s2 .9 2 2c0 2-3 1.75-3 5h2c0-2.25 3-2.5 3-5 0-2.21-1.79-4-4-4z" fill="#f0f0f0"/></svg>
<div class="a" style="left:670px;top:617px;width:752px;height:34px;background:#1e1e1e;border:1px solid #363636;border-radius:2px"></div><div class="t w" style="left:679px;top:627.5px;font-size:11.7px;color:#e6e6e6">rei</div><svg class="a" style="left:1400px;top:632.0px" width="10" height="5" viewBox="0 0 10 5"><path d="M0 0H10L5 5Z" fill="#dcdcdc"/></svg>
<div class="t w" style="left:671px;top:678.9px;font-size:9.2px;font-weight:bold;color:#e6e6e6">ACL Type *</div>
<svg class="a" style="left:727.0px;top:675.0px" width="16" height="16" viewBox="0 0 24 24"><path d="M11 18h2v-2h-2v2zm1-16C6.48 2 2 6.48 2 12s4.48 10 10 10 10-4.48 10-10S17.52 2 12 2zm0 18c-4.41 0-8-3.59-8-8s3.59-8 8-8 8 3.59 8 8-3.59 8-8 8zm0-14c-2.21 0-4 1.79-4 4h2c0-1.1.9-2 2-2s2 .9 2 2c0 2-3 1.75-3 5h2c0-2.25 3-2.5 3-5 0-2.21-1.79-4-4-4z" fill="#f0f0f0"/></svg>
<div class="a" style="left:670px;top:706px;width:20px;height:20px;border:2px solid #3f8fdc;border-radius:50%"></div><div class="a" style="left:674.5px;top:710.5px;width:11px;height:11px;background:#3f8fdc;border-radius:50%"></div><div class="t w" style="left:704px;top:711px;font-size:12.4px;color:#e8e8e8">Allow</div>
<div class="a" style="left:1046px;top:706px;width:20px;height:20px;border:2px solid #3f8fdc;border-radius:50%"></div><div class="t w" style="left:1080px;top:711.4px;font-size:12.0px;color:#e8e8e8">Deny</div>
<div class="a" style="left:656px;top:763px;width:800px;height:1px;background:#363636"></div>
<div class="t w" style="left:670px;top:781px;font-size:16.5px;font-weight:bold;color:#f0f0f0;transform:scaleX(0.835);transform-origin:0 0">Permissions</div>
<div class="t w" style="left:1055px;top:781px;font-size:16.5px;font-weight:bold;color:#f0f0f0;transform:scaleX(0.835);transform-origin:0 0">Flags</div>
<div class="t w" style="left:671px;top:826.8px;font-size:9.4px;font-weight:bold;color:#e6e6e6">Permissions Type *</div>
<svg class="a" style="left:764.0px;top:823.0px" width="16" height="16" viewBox="0 0 24 24"><path d="M11 18h2v-2h-2v2zm1-16C6.48 2 2 6.48 2 12s4.48 10 10 10 10-4.48 10-10S17.52 2 12 2zm0 18c-4.41 0-8-3.59-8-8s3.59-8 8-8 8 3.59 8 8-3.59 8-8 8zm0-14c-2.21 0-4 1.79-4 4h2c0-1.1.9-2 2-2s2 .9 2 2c0 2-3 1.75-3 5h2c0-2.25 3-2.5 3-5 0-2.21-1.79-4-4-4z" fill="#f0f0f0"/></svg>
<div class="a" style="left:670px;top:855px;width:20px;height:20px;border:2px solid #3f8fdc;border-radius:50%"></div><div class="a" style="left:674.5px;top:859.5px;width:11px;height:11px;background:#3f8fdc;border-radius:50%"></div><div class="t w" style="left:704px;top:860.5px;font-size:11.9px;color:#e8e8e8">Basic</div>
<div class="a" style="left:854px;top:855px;width:20px;height:20px;border:2px solid #3f8fdc;border-radius:50%"></div><div class="t w" style="left:887px;top:860.2px;font-size:12.4px;color:#e8e8e8">Advanced</div>
<div class="t w" style="left:671px;top:919.4px;font-size:9.2px;font-weight:bold;color:#e6e6e6">Permissions *</div>
<svg class="a" style="left:740.0px;top:915.0px" width="16" height="16" viewBox="0 0 24 24"><path d="M11 18h2v-2h-2v2zm1-16C6.48 2 2 6.48 2 12s4.48 10 10 10 10-4.48 10-10S17.52 2 12 2zm0 18c-4.41 0-8-3.59-8-8s3.59-8 8-8 8 3.59 8 8-3.59 8-8 8zm0-14c-2.21 0-4 1.79-4 4h2c0-1.1.9-2 2-2s2 .9 2 2c0 2-3 1.75-3 5h2c0-2.25 3-2.5 3-5 0-2.21-1.79-4-4-4z" fill="#f0f0f0"/></svg>
<div class="a" style="left:670px;top:937px;width:367px;height:32px;background:#1e1e1e;border:1px solid #3f8fdc;border-radius:2px"></div><div class="t w" style="left:679px;top:947.0px;font-size:12.1px;color:#e6e6e6">Full Control</div><svg class="a" style="left:1015px;top:950.5px" width="10" height="5" viewBox="0 0 10 5"><path d="M0 0H10L5 5Z" fill="#dcdcdc"/></svg>
<div class="t w" style="left:1056px;top:826.75px;font-size:9.5px;font-weight:bold;color:#e6e6e6">Flags Type *</div>
<svg class="a" style="left:1118.0px;top:823.0px" width="16" height="16" viewBox="0 0 24 24"><path d="M11 18h2v-2h-2v2zm1-16C6.48 2 2 6.48 2 12s4.48 10 10 10 10-4.48 10-10S17.52 2 12 2zm0 18c-4.41 0-8-3.59-8-8s3.59-8 8-8 8 3.59 8 8-3.59 8-8 8zm0-14c-2.21 0-4 1.79-4 4h2c0-1.1.9-2 2-2s2 .9 2 2c0 2-3 1.75-3 5h2c0-2.25 3-2.5 3-5 0-2.21-1.79-4-4-4z" fill="#f0f0f0"/></svg>
<div class="a" style="left:1055px;top:855px;width:20px;height:20px;border:2px solid #3f8fdc;border-radius:50%"></div><div class="a" style="left:1059.5px;top:859.5px;width:11px;height:11px;background:#3f8fdc;border-radius:50%"></div><div class="t w" style="left:1089px;top:860.5px;font-size:11.9px;color:#e8e8e8">Basic</div>
<div class="a" style="left:1239px;top:855px;width:20px;height:20px;border:2px solid #3f8fdc;border-radius:50%"></div><div class="t w" style="left:1272px;top:860.2px;font-size:12.4px;color:#e8e8e8">Advanced</div>
<div class="t w" style="left:1056px;top:910.75px;font-size:9.5px;font-weight:bold;color:#e6e6e6">Flags *</div>
<svg class="a" style="left:1095.0px;top:907.0px" width="16" height="16" viewBox="0 0 24 24"><path d="M11 18h2v-2h-2v2zm1-16C6.48 2 2 6.48 2 12s4.48 10 10 10 10-4.48 10-10S17.52 2 12 2zm0 18c-4.41 0-8-3.59-8-8s3.59-8 8-8 8 3.59 8 8-3.59 8-8 8zm0-14c-2.21 0-4 1.79-4 4h2c0-1.1.9-2 2-2s2 .9 2 2c0 2-3 1.75-3 5h2c0-2.25 3-2.5 3-5 0-2.21-1.79-4-4-4z" fill="#f0f0f0"/></svg>
<div class="a" style="left:1055px;top:939px;width:20px;height:20px;border:2px solid #3f8fdc;border-radius:50%"></div><div class="a" style="left:1059.5px;top:943.5px;width:11px;height:11px;background:#3f8fdc;border-radius:50%"></div><div class="t w" style="left:1089px;top:943.9px;font-size:13.0px;color:#e8e8e8">Inherit</div>
<div class="a" style="left:1239px;top:939px;width:20px;height:20px;border:2px solid #3f8fdc;border-radius:50%"></div><div class="t w" style="left:1272px;top:944.0px;font-size:12.9px;color:#e8e8e8">No Inherit</div>
<!--TASKBAR-->

<div id="sb">
  <svg class="a" style="left:3px;top:5px" width="9" height="7" viewBox="0 0 9 7"><path d="M4.5 0.5L8.8 6.5H0.2Z" fill="#333"/></svg>
  <div class="a" style="left:3px;top:17px;width:9px;height:835px;border-radius:4.5px;background:#333"></div>
  <svg class="a" style="left:3px;top:886px" width="9" height="7" viewBox="0 0 9 7"><path d="M4.5 6.5L8.8 0.5H0.2Z" fill="#333"/></svg>
</div>
<div id="taskbar">
  <div class="a" style="left:0;top:0;width:1920px;height:1px;background:rgba(120,120,130,.35)"></div>
  <svg class="a" style="left:20px;top:8px" width="30" height="30" viewBox="0 0 30 30"><defs><linearGradient id="sun" x1="0" y1="0" x2="1" y2="1"><stop offset="0" stop-color="#f7c21b"/><stop offset="1" stop-color="#eb5a0f"/></linearGradient></defs><circle cx="11" cy="15" r="10" fill="url(#sun)"/><circle cx="18" cy="5.8" r="8" fill="#c8281c"/><text x="18" y="9.6" font-family="Liberation Sans" font-size="10.5" fill="#fff" text-anchor="middle">9+</text></svg>
  <div class="t" style="left:51px;top:11px;font-size:10.7px;color:#1b1b1b">9°C</div>
  <svg class="a" style="left:51px;top:26px" width="22" height="11" viewBox="0 0 22 11"><g fill="none" stroke="#4a4a4a" stroke-width="1"><path d="M1 1.5H4V9H1Z M1 5H4"/><path d="M5.5 2H10M5.5 4H10M5.5 6H10M7.7 0.5V6M6 7.5H9.5V10.5H6Z M6 9H9.5"/><path d="M13 1V10.5M11.3 3.5H15Q14 8 11.5 10M15 5.5Q17 3.5 18.5 4.5Q19.5 5.5 19 9.5Q19.5 10.5 21 9.5"/></g></svg>
  <svg class="a" style="left:705px;top:13px" width="24" height="24" viewBox="0 0 24 24"><defs><linearGradient id="win" x1="0" y1="0" x2="1" y2="1"><stop offset="0" stop-color="#4fd0f7"/><stop offset="1" stop-color="#0866d1"/></linearGradient></defs><path d="M0.5 0.5H11V11H0.5Z M12.5 0.5H23V11H12.5Z M0.5 12.5H11V23H0.5Z M12.5 12.5H23V23H12.5Z" fill="url(#win)"/></svg>
  <div class="a" style="left:742px;top:9px;width:218px;height:31px;border-radius:16px;background:rgba(250,248,252,.92);border:1px solid rgba(160,160,170,.35)"></div>
  <svg class="a" style="left:752px;top:16px" width="16" height="16" viewBox="0 0 16 16"><circle cx="6.5" cy="6.5" r="5" fill="none" stroke="#1e1e1e" stroke-width="1.6"/><path d="M10.2 10.2L14.5 14.5" stroke="#1e1e1e" stroke-width="1.8"/></svg>
  <svg class="a" style="left:778px;top:17px" width="28" height="14" viewBox="0 0 28 14"><g fill="none" stroke="#5a5a5a" stroke-width="1"><path d="M3 0.5V13.5M0.5 4H5.5M1 9L3 6M5 8L3 6"/><path d="M9.5 1L6.5 5M9.5 1L12.5 5M7.5 6H11.5M7 8H12V11H7Z M9.5 8V13.5M7 13L9.5 11M12 13L9.5 11"/><path d="M20.5 0.5V3M15.5 2H25.5M16 3.5V5M25 3.5V5M17 5H24L20 8.5H23.5L19 11.5H22M20.5 11V13.5M17 11L15.5 13M24 11L25.5 13"/></g></svg>
  <svg class="a" style="left:911px;top:11px" width="48" height="28" viewBox="0 0 48 28"><path d="M0 26Q10 18 22 16Q36 12 47 12V22Q47 27 40 27H6Z" fill="#7bb63a"/><path d="M0 27Q12 22 30 25L28 28H0Z" fill="#c9b79a"/><path d="M30 10L32 4L33 10M34 12V6H37V12M38 12V7H41V12" fill="#9aa0a8"/><path d="M32 0.5L34 12H30Z" fill="#e0452c"/><circle cx="6" cy="3" r="2" fill="#e8a060"/><path d="M4 6H9L8 14L11 22H9L6 16L3 23H1L4 14Z" fill="#4a90c8"/><circle cx="18" cy="7" r="2.4" fill="#e8b080"/><path d="M14 11H22L20 20L23 26H19Z" fill="#f07d2a"/></svg>
  <svg class="a" style="left:972px;top:12px" width="26" height="24" viewBox="0 0 26 24"><rect x="1" y="7" width="18" height="16" rx="1.5" fill="#1b1b1b"/><rect x="7" y="1" width="17.5" height="15" rx="1.5" fill="#fbfbfb" stroke="#cfcfcf" stroke-width=".6"/><rect x="7" y="7" width="12" height="9" fill="#b9b9b9"/></svg>
  <svg class="a" style="left:1016px;top:12px" width="26" height="24" viewBox="0 0 26 24"><defs><linearGradient id="cop1" x1="0" y1="0" x2="1" y2="1"><stop offset="0" stop-color="#2aa5f5"/><stop offset=".5" stop-color="#3d6ef2"/><stop offset="1" stop-color="#b04ff0"/></linearGradient><linearGradient id="cop2" x1="0" y1="1" x2="1" y2="0"><stop offset="0" stop-color="#f8c21c"/><stop offset=".5" stop-color="#f0664a"/><stop offset="1" stop-color="#e74fb5"/></linearGradient></defs><path d="M8 2Q10 0.5 13 1.5H16Q19 1.5 18 5L14 16Q12 20 9 20H5Q1 20 2.5 15L6 5Q7 2.5 8 2Z" fill="url(#cop1)"/><path d="M18 22Q16 23.5 13 22.5H10Q7 22.5 8 19L12 8Q14 4 17 4H21Q25 4 23.5 9L20 19Q19 21.5 18 22Z" fill="url(#cop2)" opacity=".92"/></svg>
  <svg class="a" style="left:1060px;top:11px" width="26" height="26" viewBox="0 0 26 26"><defs><linearGradient id="edg" x1="0" y1="0" x2="1" y2="1"><stop offset="0" stop-color="#36c0e8"/><stop offset=".6" stop-color="#1e8fd8"/><stop offset="1" stop-color="#5fd35a"/></linearGradient></defs><circle cx="13" cy="13" r="12.3" fill="url(#edg)"/><path d="M6 12Q7 6.5 13.5 6.5Q20 6.5 21 12.5Q21 15.5 17 15.5H10Q10 20 15 20.5Q18.5 21 22 19Q19 25 12.5 25Q4 24.5 2.5 16Q4 10 6 12Z" fill="#1565b8"/><path d="M10 15.5Q10.5 11 14 11Q17.5 11 17.5 13.8" fill="#2aa4e5"/></svg>
  <svg class="a" style="left:1104px;top:12px" width="26" height="24" viewBox="0 0 26 24"><path d="M0.5 2.5Q0.5 1 2 1H9L11 3.5H24Q25.5 3.5 25.5 5V22Q25.5 23.5 24 23.5H2Q0.5 23.5 0.5 22Z" fill="#f4bd2c"/><path d="M0.5 6H25.5V22Q25.5 23.5 24 23.5H2Q0.5 23.5 0.5 22Z" fill="#fdd65b"/><rect x="6" y="15" width="14" height="7" rx="1.5" fill="#1f7fd5"/><rect x="8.5" y="17" width="9" height="1.6" fill="#5eb0f0"/></svg>
  <div class="a" style="left:1114px;top:40.5px;width:6px;height:2.5px;border-radius:2px;background:#8a8a8a"></div>
  <div class="a" style="left:1177px;top:6px;width:4px;height:37px;border-radius:0 4px 4px 0;background:rgba(245,245,248,.9);border:1px solid rgba(190,190,200,.6);border-left:none"></div>
  <div class="a" style="left:1142px;top:5px;width:34px;height:38px;border-radius:4px;background:rgba(246,246,250,.95);border:1px solid rgba(190,190,200,.6)"></div>
  <svg class="a" style="left:1149px;top:12px" width="24" height="24" viewBox="0 0 24 24"><circle cx="12" cy="12" r="12" fill="#dc4437"/><path d="M12 12L1.6 6A12 12 0 0 0 12 24Z" fill="#1f9e53"/><path d="M12 12L22.4 6A12 12 0 0 1 12 24Z" fill="#fbc02d"/><path d="M12 6.5H22.4L12 12Z" fill="#dc4437"/><circle cx="12" cy="12" r="5.6" fill="#fff"/><circle cx="12" cy="12" r="4.4" fill="#1a73e8"/></svg>
  <div class="a" style="left:1153px;top:40px;width:16px;height:3px;border-radius:2px;background:#1a6fd8"></div>
  <svg class="a" style="left:1194px;top:11px" width="24" height="26" viewBox="0 0 24 26"><rect x="0.5" y="3" width="16" height="21" rx="1" fill="#d5dcf0" stroke="#7a88b0" stroke-width=".8"/><rect x="2.5" y="1.5" width="16" height="21" rx="1" fill="#eef1fa" stroke="#7a88b0" stroke-width=".8"/><path d="M5 7H16M5 10H16M5 13H16M5 16H13" stroke="#8f9ac0" stroke-width=".8"/><path d="M14 19L21 4L23 5L16 20L13.5 21Z" fill="#3b3b3b"/><path d="M21 4L22 1.5L23.5 2.5L23 5Z" fill="#e0452c"/></svg>
  <div class="a" style="left:1202px;top:40.5px;width:6px;height:2.5px;border-radius:2px;background:#8a8a8a"></div>
  <svg class="a" style="left:1621px;top:20px" width="12" height="8" viewBox="0 0 12 8"><path d="M1 7L6 1.5L11 7" fill="none" stroke="#1b1b1b" stroke-width="1.3"/></svg>
  <svg class="a" style="left:1650px;top:17px" width="18" height="12" viewBox="0 0 18 12"><defs><linearGradient id="od" x1="0" y1="0" x2="1" y2="1"><stop offset="0" stop-color="#f2f2f2"/><stop offset="1" stop-color="#9a9a9a"/></linearGradient></defs><path d="M4 11.5H14.5Q17.5 11.5 17.5 8.5Q17.5 5.5 14.5 5.5Q13.5 0.5 9 0.5Q5.5 0.5 4.5 4Q0.5 4.5 0.5 8Q0.5 11.5 4 11.5Z" fill="url(#od)" stroke="#555" stroke-width=".8"/></svg>
  <svg class="a" style="left:1682px;top:15px" width="17" height="17" viewBox="0 0 17 17"><circle cx="8.5" cy="8.5" r="8" fill="#1b1b1b"/><path d="M5.5 5.5L11.5 11.5M11.5 5.5L5.5 11.5" stroke="#fff" stroke-width="1.5"/></svg>
  <svg class="a" style="left:1721px;top:16px" width="16" height="16" viewBox="0 0 16 16"><rect x="0.5" y="0.5" width="15" height="15" fill="#fff" stroke="#bbb" stroke-width=".8"/><path d="M4 10L7 3H9L13 14H11L8 6L5.5 11.5Z" fill="#111"/></svg>
  <svg class="a" style="left:1759px;top:17px" width="17" height="13" viewBox="0 0 17 13"><path d="M1 4.8Q8.5 -1.5 16 4.8M3.4 7.2Q8.5 3 13.6 7.2M5.8 9.5Q8.5 7.3 11.2 9.5" fill="none" stroke="#1b1b1b" stroke-width="1.3"/><circle cx="8.5" cy="11.5" r="1.3" fill="#1b1b1b"/></svg>
  <svg class="a" style="left:1783px;top:17px" width="17" height="13" viewBox="0 0 17 13"><path d="M1 4.5H4L8 1V12L4 8.5H1Z" fill="none" stroke="#1b1b1b" stroke-width="1.1" stroke-linejoin="round"/><path d="M10.5 4Q12 6.5 10.5 9M12.8 2.5Q15.3 6.5 12.8 10.5" fill="none" stroke="#1b1b1b" stroke-width="1.1"/><path d="M15 1Q18 6.5 15 12" fill="none" stroke="#999" stroke-width="1"/></svg>
  <svg class="a" style="left:1806px;top:16px" width="18" height="14" viewBox="0 0 18 14"><rect x="1" y="3.5" width="14" height="9" rx="1.5" fill="none" stroke="#1b1b1b" stroke-width="1.3"/><rect x="15.5" y="6" width="2" height="4" fill="#1b1b1b"/><rect x="2.5" y="5" width="11" height="6" fill="#1b1b1b"/><path d="M3 0.5L1.5 5H4L3 8" fill="none" stroke="#1b1b1b" stroke-width="1"/></svg>
  <div class="t" style="right:20px;top:11px;font-size:11px;color:#1b1b1b">10:44</div>
  <div class="t" style="right:20px;top:27px;font-size:12px;color:#1b1b1b">2026/01/02</div>
</div>
</body></html>
